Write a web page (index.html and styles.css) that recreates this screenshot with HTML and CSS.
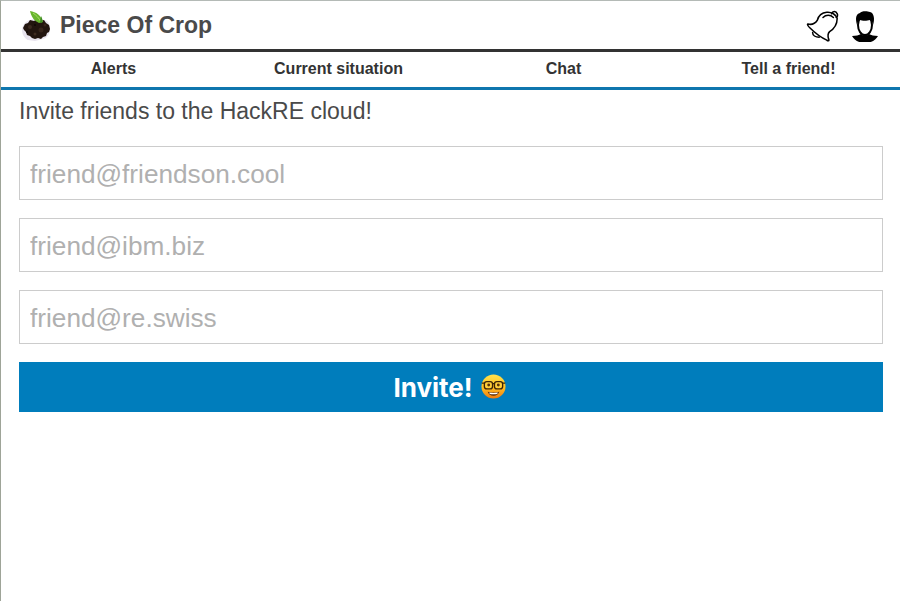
FILE: index.html
```html
<!DOCTYPE html>
<html lang="en">
<head>
    <meta charset="UTF-8">
    <title>Piece Of Crop</title>
    <link rel="stylesheet" href="styles.css">
</head>
<body>
    <header class="top-bar">
        <div class="brand">
            <svg class="logo" width="34" height="34" viewBox="0 0 34 34">
                <path d="M1 22c0-5 4-9 8-10l8-2 9 3c2 2 3 5 3 8 0 5-3 9-7 10l-8 2-7-1c-4-2-6-6-6-10z" fill="#e8e4ee"/>
                <path d="M2 20l2-4 3-1 2-3 4 1 3-2 3 2 4-1 2 3 3 2 1 4-1 3-2 1-1 3-3 1-2 2-3-1-3 1-3-1-2-2-3-1-1-3-2-2z" fill="#22150f"/>
                <circle cx="9" cy="19" r="2" fill="#3b2a20"/>
                <circle cx="20" cy="22" r="2.500" fill="#36251b"/>
                <circle cx="14" cy="26" r="1.500" fill="#3f2c21"/>
                <circle cx="24" cy="17" r="1.500" fill="#36251b"/>
                <circle cx="14" cy="17" r="1" fill="#0e0805"/>
                <circle cx="6" cy="24" r="1" fill="#0e0805"/>
                <path d="M18 15C13 13 10 8 9 3c6 1 11 4 13 11z" fill="#68b52e"/>
                <path d="M12 5c3 2 6 5 8 9" stroke="#a4dc63" stroke-width="1" fill="none"/>
                <path d="M20 8c1 2 2 4 1 7l-2-1z" fill="#3f8a25"/>
            </svg>
            <span class="brand-name">Piece Of Crop</span>
        </div>
        <div class="top-icons">
            <svg width="34" height="34" viewBox="-1 -3 36 36" fill="none" stroke="#000" stroke-width="1.600" stroke-linejoin="round" stroke-linecap="round">
                <path d="M1 14C5 15 9 13 11 10 12 6 15 2 21 1.500 26 1 31 4 32 8 32 13 30 18 24 22 22 24 22 27 23 30 24 32 22 32 21 31 14 28 7 22 3 18 1 16 0 14 1 14z"/>
                <path d="M17 7C20 4 25 4 28 7"/>
                <path d="M26 3C27 0 31 0 32 3 33 5 32 7 31 7"/>
                <path d="M6 23C6 26 9 28 13 28"/>
            </svg>
            <svg width="28" height="34" viewBox="0 -2 28 34">
                <path d="M1 26C5 26 8 25 10 24 12 26 16 26 18 24 20 25 23 26 27 26 25 30 20 33 14 33 8 33 3 30 1 26z" fill="#000"/>
                <ellipse cx="14" cy="15" rx="7" ry="10" fill="#fff" stroke="#000" stroke-width="2"/>
                <path d="M6 15C4 8 5 4 9 3 10 1 16 1 19 2 23 3 24 9 22 15 22 13 21 11 19 10 16 11 11 11 9 10 7 11 6 13 6 15z" fill="#000"/>
            </svg>
        </div>
    </header>
    <nav class="main-nav">
        <a class="nav-item">Alerts</a>
        <a class="nav-item">Current situation</a>
        <a class="nav-item">Chat</a>
        <a class="nav-item">Tell a friend!</a>
    </nav>
    <main class="invite">
        <h1 class="invite-title">Invite friends to the HackRE cloud!</h1>
        <input class="invite-input" type="text" placeholder="friend@friendson.cool">
        <input class="invite-input" type="text" placeholder="friend@ibm.biz">
        <input class="invite-input" type="text" placeholder="friend@re.swiss">
        <button class="invite-button">Invite!
            <svg class="nerd" width="25" height="25" viewBox="0 0 26 26">
                <defs>
                    <linearGradient id="face" x1="0" y1="0" x2="0" y2="1">
                        <stop offset="0" stop-color="#ffe24d"/>
                        <stop offset="0.55" stop-color="#ffbe1f"/>
                        <stop offset="1" stop-color="#ee7a10"/>
                    </linearGradient>
                </defs>
                <circle cx="13" cy="13" r="12.500" fill="url(#face)"/>
                <rect x="3.500" y="8" width="8.500" height="7.500" rx="2.500" fill="#ffcf3a" stroke="#3b2408" stroke-width="1.400"/>
                <rect x="14" y="8" width="8.500" height="7.500" rx="2.500" fill="#ffcf3a" stroke="#3b2408" stroke-width="1.400"/>
                <path d="M.8 9.500h3M12 10h2M22.200 9.500h3" stroke="#3b2408" stroke-width="1.400"/>
                <circle cx="8" cy="11.500" r="1.500" fill="#5a3208"/>
                <circle cx="18" cy="11.500" r="1.500" fill="#5a3208"/>
                <path d="M7 18.500c3 1 9 1 12 0-1 3-3 4-6 4s-5-1-6-4z" fill="#5a2c08"/>
                <path d="M8.500 19.200c3 .6 6 .6 9 0l-.6 1.500c-2.500.4-5.300.4-7.800 0z" fill="#fff"/>
            </svg>
        </button>
    </main>
</body>
</html>
```

FILE: styles.css
```css
html, body {
    height: 100%;
}
body {
    margin: 0;
    box-sizing: border-box;
    border-top: 1px solid #b4bab6;
    border-left: 1px solid #9ea498;
    background: #fff;
    font-family: "Liberation Sans", Arial, sans-serif;
    overflow: hidden;
}
.top-bar {
    display: flex;
    justify-content: space-between;
    align-items: center;
    height: 48px;
    padding: 0 21px 0 20px;
    border-bottom: 3px solid #333;
}
.brand {
    display: flex;
    align-items: center;
    gap: 5px;
}
.logo {
    display: block;
}
.brand-name {
    font-size: 23px;
    font-weight: bold;
    color: #4a4a4a;
}
.top-icons {
    display: flex;
    align-items: center;
    gap: 11px;
}
.main-nav {
    display: grid;
    grid-template-columns: repeat(4, 1fr);
    height: 33px;
    padding-bottom: 2px;
    margin-right: -1px;
    border-bottom: 3px solid #0e76ae;
    align-items: center;
}
.nav-item {
    text-align: center;
    font-size: 16px;
    font-weight: bold;
    color: #333;
}
.invite {
    display: flex;
    flex-direction: column;
    padding: 0 17px 0 18px;
}
.invite-title {
    margin: 8px 0 21px;
    font-size: 23px;
    line-height: 27px;
    font-weight: normal;
    color: #4a4a4a;
}
.invite-input {
    box-sizing: border-box;
    height: 54px;
    margin-bottom: 18px;
    padding: 3px 10px 0;
    border: 1px solid #ccc;
    font-family: inherit;
    font-size: 26.2px;
    color: #333;
    outline: none;
}
.invite-input::placeholder {
    color: #b0b0b0;
    opacity: 1;
}
.invite-button {
    display: flex;
    justify-content: center;
    align-items: center;
    gap: 8px;
    height: 50px;
    padding: 0 3px 0 0;
    border: none;
    background: #007dbc;
    color: #fff;
    font-family: Inter, sans-serif;
    font-size: 26px;
    font-weight: 700;
}
.nerd {
    display: block;
    margin-top: -2px;
}
```
